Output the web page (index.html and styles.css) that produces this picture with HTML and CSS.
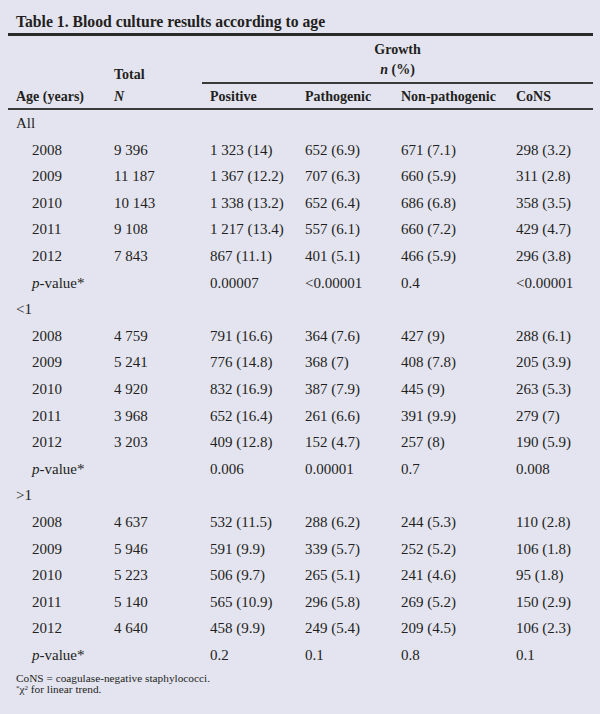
FILE: index.html
```html
<!DOCTYPE html>
<html lang="en">
<head>
<meta charset="utf-8">
<title>Table 1. Blood culture results according to age</title>
<link rel="stylesheet" href="styles.css">
</head>
<body>
<div class="wrap">
  <div class="title">Table 1. Blood culture results according to age</div>
  <table class="tbl">
    <colgroup>
      <col class="c-age"><col class="c-total"><col class="c-pos"><col class="c-path"><col class="c-non"><col class="c-cons">
    </colgroup>
    <thead>
      <tr class="h1">
        <th class="blank"></th>
        <th class="total">Total</th>
        <th class="growth" colspan="4">Growth<br><i>n</i> (%)</th>
      </tr>
      <tr class="h2">
        <th>Age (years)</th>
        <th><i>N</i></th>
        <th>Positive</th>
        <th>Pathogenic</th>
        <th>Non-pathogenic</th>
        <th>CoNS</th>
      </tr>
    </thead>
    <tbody>
      <tr><td class="grp">All</td><td></td><td></td><td></td><td></td><td></td></tr>
      <tr><td class="ind">2008</td><td>9 396</td><td>1 323 (14)</td><td>652 (6.9)</td><td>671 (7.1)</td><td>298 (3.2)</td></tr>
      <tr><td class="ind">2009</td><td>11 187</td><td>1 367 (12.2)</td><td>707 (6.3)</td><td>660 (5.9)</td><td>311 (2.8)</td></tr>
      <tr><td class="ind">2010</td><td>10 143</td><td>1 338 (13.2)</td><td>652 (6.4)</td><td>686 (6.8)</td><td>358 (3.5)</td></tr>
      <tr><td class="ind">2011</td><td>9 108</td><td>1 217 (13.4)</td><td>557 (6.1)</td><td>660 (7.2)</td><td>429 (4.7)</td></tr>
      <tr><td class="ind">2012</td><td>7 843</td><td>867 (11.1)</td><td>401 (5.1)</td><td>466 (5.9)</td><td>296 (3.8)</td></tr>
      <tr><td class="ind"><i>p</i>-value*</td><td></td><td>0.00007</td><td>&lt;0.00001</td><td>0.4</td><td>&lt;0.00001</td></tr>
      <tr><td class="grp">&lt;1</td><td></td><td></td><td></td><td></td><td></td></tr>
      <tr><td class="ind">2008</td><td>4 759</td><td>791 (16.6)</td><td>364 (7.6)</td><td>427 (9)</td><td>288 (6.1)</td></tr>
      <tr><td class="ind">2009</td><td>5 241</td><td>776 (14.8)</td><td>368 (7)</td><td>408 (7.8)</td><td>205 (3.9)</td></tr>
      <tr><td class="ind">2010</td><td>4 920</td><td>832 (16.9)</td><td>387 (7.9)</td><td>445 (9)</td><td>263 (5.3)</td></tr>
      <tr><td class="ind">2011</td><td>3 968</td><td>652 (16.4)</td><td>261 (6.6)</td><td>391 (9.9)</td><td>279 (7)</td></tr>
      <tr><td class="ind">2012</td><td>3 203</td><td>409 (12.8)</td><td>152 (4.7)</td><td>257 (8)</td><td>190 (5.9)</td></tr>
      <tr><td class="ind"><i>p</i>-value*</td><td></td><td>0.006</td><td>0.00001</td><td>0.7</td><td>0.008</td></tr>
      <tr><td class="grp">&gt;1</td><td></td><td></td><td></td><td></td><td></td></tr>
      <tr><td class="ind">2008</td><td>4 637</td><td>532 (11.5)</td><td>288 (6.2)</td><td>244 (5.3)</td><td>110 (2.8)</td></tr>
      <tr><td class="ind">2009</td><td>5 946</td><td>591 (9.9)</td><td>339 (5.7)</td><td>252 (5.2)</td><td>106 (1.8)</td></tr>
      <tr><td class="ind">2010</td><td>5 223</td><td>506 (9.7)</td><td>265 (5.1)</td><td>241 (4.6)</td><td>95 (1.8)</td></tr>
      <tr><td class="ind">2011</td><td>5 140</td><td>565 (10.9)</td><td>296 (5.8)</td><td>269 (5.2)</td><td>150 (2.9)</td></tr>
      <tr><td class="ind">2012</td><td>4 640</td><td>458 (9.9)</td><td>249 (5.4)</td><td>209 (4.5)</td><td>106 (2.3)</td></tr>
      <tr><td class="ind"><i>p</i>-value*</td><td></td><td>0.2</td><td>0.1</td><td>0.8</td><td>0.1</td></tr>
    </tbody>
  </table>
  <div class="notes">
    <div>CoNS = coagulase-negative staphylococci.</div>
    <div><sup>*</sup>χ<sup>2</sup> for linear trend.</div>
  </div>
</div>
</body>
</html>
```

FILE: styles.css
```css
html, body {
  margin: 0;
  padding: 0;
  background: #e4e4f0;
}

body {
  font-family: "Liberation Serif", "Times New Roman", serif;
  color: #231f20;
  width: 600px;
  height: 714px;
  overflow: hidden;
}

.wrap {
  padding: 0 7px 0 8px;
}

.title {
  font-size: 15.7px;
  font-weight: bold;
  line-height: 20px;
  padding: 11.5px 0 1.5px 8px;
  border-bottom: 3px solid #2a2a2a;
}

.tbl {
  width: 585px;
  table-layout: fixed;
  border-collapse: separate;
  border-spacing: 0;
}

.c-age { width: 98px; }
.c-total { width: 96px; }
.c-pos { width: 95px; }
.c-path { width: 96px; }
.c-non { width: 115px; }
.c-cons { width: 85px; }

.tbl th {
  font-size: 14px;
  font-weight: bold;
  text-align: left;
  padding: 0 0 0 8px;
  line-height: 20px;
}

.h1 th {
  vertical-align: bottom;
}

.h1 .growth {
  text-align: center;
  padding: 4px 0 2px 0;
  border-bottom: 2px solid #3a3a3a;
}

.h1 .total {
  line-height: 16px;
  padding-bottom: 1px;
}

.h2 th {
  padding-top: 3px;
  padding-bottom: 1px;
  border-bottom: 2px solid #3a3a3a;
  white-space: nowrap;
}

.tbl td {
  font-size: 15px;
  line-height: 26.6px;
  height: 26.6px;
  padding: 0 0 0 8px;
  white-space: nowrap;
  vertical-align: top;
}

.tbl td.ind {
  padding-left: 24px;
}

.notes {
  margin-top: 4.8px;
  padding-left: 8px;
  font-size: 11.3px;
  line-height: 11px;
}

.notes sup {
  font-size: 7px;
  line-height: 0;
  vertical-align: 3px;
}
```
